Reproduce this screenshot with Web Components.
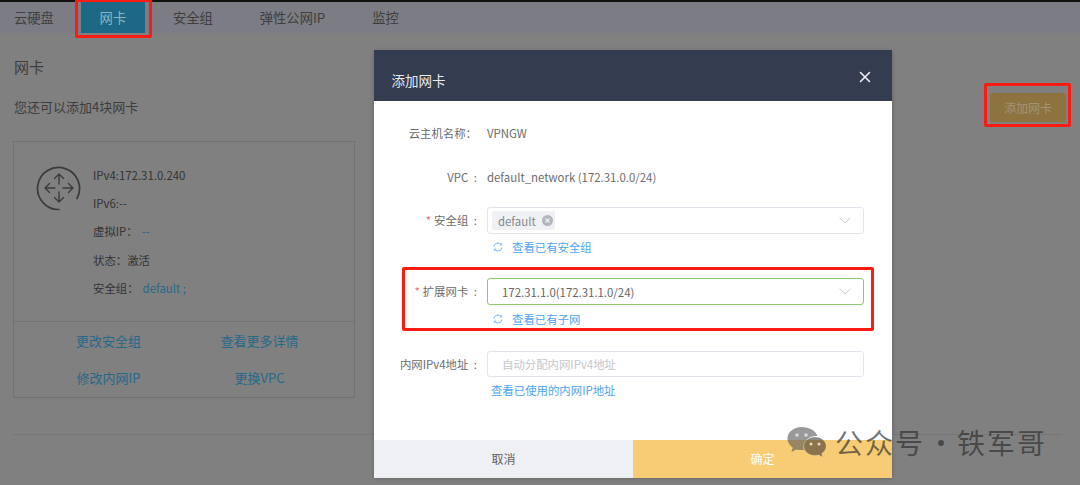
<!DOCTYPE html>
<html lang="zh">
<head>
<meta charset="utf-8">
<title>添加网卡</title>
<style>
  html, body { margin: 0; height: 485px; overflow: hidden; }
  body {
    position: relative;
    background: #808080;
    font-family: "Noto Sans CJK SC", "Liberation Sans", sans-serif;
    font-size: 12px;
    color: #3d3d3d;
  }
</style>
</head>
<body>
  <tab-bar>
    <tab-item>云硬盘</tab-item>
    <tab-item active>网卡</tab-item>
    <tab-item>安全组</tab-item>
    <tab-item>弹性公网IP</tab-item>
    <tab-item>监控</tab-item>
  </tab-bar>

  <nic-page>
    <nic-card>
      <card-link slot="actions">更改安全组</card-link>
      <card-link slot="actions">查看更多详情</card-link>
      <card-link slot="actions">修改内网IP</card-link>
      <card-link slot="actions">更换VPC</card-link>
    </nic-card>
  </nic-page>

  <nic-dialog heading="添加网卡">
    <form-row label="云主机名称：" style="--top:19px">VPNGW</form-row>
    <form-row label="VPC :" style="--top:18px">default_network (172.31.0.0/24)</form-row>
    <form-row label="安全组 :" required style="--top:17px">
      <select-box><tag-chip>default</tag-chip></select-box>
      <hint-link slot="hint" refresh>查看已有安全组</hint-link>
    </form-row>
    <form-row label="扩展网卡 :" required style="--top:20px">
      <select-box ok>172.31.1.0(172.31.1.0/24)</select-box>
      <hint-link slot="hint" refresh style="margin-top:4px;margin-bottom:0">查看已有子网</hint-link>
    </form-row>
    <form-row label="内网IPv4地址 :" style="--top:22px">
      <select-box plain placeholder style="height:26px">自动分配内网IPv4地址</select-box>
      <hint-link slot="hint">查看已使用的内网IP地址</hint-link>
    </form-row>
  </nic-dialog>

  <red-mark style="left:75px;top:-1px;width:77px;height:39px"></red-mark>
  <red-mark style="left:984px;top:83px;width:87px;height:44px"></red-mark>
  <red-mark style="left:402px;top:267px;width:472px;height:64px"></red-mark>
  <wechat-mark></wechat-mark>

<script>
// each component: small template + shadow root
function define(name, html, extra) {
  const tpl = document.createElement('template');
  tpl.innerHTML = html;
  class El extends HTMLElement {
    constructor() {
      super();
      this.attachShadow({ mode: 'open' });
      this.shadowRoot.appendChild(tpl.content.cloneNode(true));
    }
    connectedCallback() { if (extra) extra(this, this.shadowRoot); }
  }
  customElements.define(name, El);
}

define('tab-bar', `
  <style>
    :host {
      display: flex;
      height: 31px;
      background: #7b7c84;
      border-top: 2px solid #111;
      padding-left: 14px;
      font-size: 13.3px;
      color: #3f3f3f;
    }
  </style>
  <slot></slot>
`);

define('tab-item', `
  <style>
    :host {
      display: flex;
      align-items: center;
      justify-content: center;
      margin-right: 47px;
    }
    :host([active]) {
      width: 64px;
      margin: 0 28px 0 -20px;
      background: #1d6884;
      color: #8fb3c1;
    }
  </style>
  <slot></slot>
`);

define('nic-page', `
  <style>
    :host { display: block; padding: 0 13px; }
    .head { display: flex; flex-direction: column; }
    h2 { margin: 23px 0 0 1px; font-size: 15px; line-height: 22px; font-weight: 400; color: #3d3d3d; }
    .row { display: flex; justify-content: space-between; align-items: center; margin-top: 15px; height: 29px; }
    p { margin: -2px 0 0 1px; font-size: 13px; color: #3d3d3d; }
    button {
      width: 76px; height: 29px; margin-right: 1px;
      border: 0; border-radius: 3px;
      background: #8c7340; color: #a39374;
      font: inherit; font-size: 12px;
    }
    .rule { height: 1px; background: #767676; margin: 36px 5px 0 0; }
  </style>
  <div class="head">
    <h2>网卡</h2>
    <div class="row"><p>您还可以添加4块网卡</p><button>添加网卡</button></div>
  </div>
  <slot></slot>
  <div class="rule"></div>
`);

define('nic-card', `
  <style>
    :host {
      display: block;
      box-sizing: border-box;
      width: 342px;
      height: 257px;
      margin-top: 19px;
      border: 1px solid #727272;
      font-size: 11.4px;
      color: #333;
    }
    .top {
      display: flex;
      height: 180px;
      box-sizing: border-box;
      border-bottom: 1px solid #727272;
      padding: 19px 0 0 22px;
    }
    svg { width: 46px; height: 46px; margin-top: 4px; flex: none; }
    ul { list-style: none; margin: 0 0 0 11px; padding: 0; }
    li { height: 28.2px; line-height: 28px; white-space: nowrap; }
    b { font-weight: 400; color: #24698a; margin-left: 4px; }
    .actions {
      display: grid;
      grid-template-columns: 151px 151px;
      grid-auto-rows: 37px;
      padding: 0 0 0 19px;
    }
  </style>
  <div class="top">
    <svg viewBox="0 0 46 46" fill="none" stroke="#3b3b3b" stroke-linecap="round" stroke-linejoin="round">
      <path stroke-width="1.700" d="M23 44.500A21 21 0 1 1 41 33.500"/>
      <path stroke-width="1.400" d="M23 9v10M18.500 13.500l4.500-4.500 4.500 4.500M23 27v10M18.500 32.500l4.500 4.500 4.500-4.500M9 23h10M13.500 18.500l-4.500 4.500 4.500 4.500M27 23h10M32.500 18.500l4.500 4.500-4.500 4.500"/>
    </svg>
    <ul>
      <li>IPv4:172.31.0.240</li>
      <li>IPv6:--</li>
      <li>虚拟IP：<b>--</b></li>
      <li>状态：激活</li>
      <li>安全组：<b>default ;</b></li>
    </ul>
  </div>
  <div class="actions"><slot name="actions"></slot></div>
`);

define('card-link', `
  <style>
    :host {
      display: flex;
      align-items: center;
      justify-content: center;
      font-size: 13px;
      color: #26698a;
    }
  </style>
  <slot></slot>
`);

define('nic-dialog', `
  <style>
    :host {
      position: absolute;
      left: 374px;
      top: 50px;
      width: 518px;
      height: 427px;
      display: flex;
      flex-direction: column;
      background: #fff;
      box-shadow: 0 1px 4px rgba(0,0,0,.25);
      color: #666;
    }
    header {
      flex: none;
      height: 51px;
      box-sizing: border-box;
      display: flex;
      justify-content: space-between;
      padding: 19px 21px 0 17.5px;
      background: #343c50;
      color: #e8e9ec;
      font-size: 13.5px;
      line-height: 22px;
    }
    svg { width: 12px; height: 12px; margin-top: 2px; }
    main { flex: 1; display: flex; flex-direction: column; }
    footer { flex: none; height: 37px; display: grid; grid-template-columns: 259px 259px; line-height: 38px; text-align: center; font-size: 12px; }
    .cancel { background: #eff0f4; color: #5f5f5f; }
    .ok { background: #f8cc74; color: #fff; }
  </style>
  <header>
    <span id="title"></span>
    <svg viewBox="0 0 12 12" stroke="#eef0f3" stroke-width="1.600" stroke-linecap="round"><path d="M1.500 1.500l9 9M10.500 1.500l-9 9"/></svg>
  </header>
  <main><slot></slot></main>
  <footer><div class="cancel">取消</div><div class="ok">确定</div></footer>
`, (el, root) => { root.getElementById('title').textContent = el.getAttribute('heading'); });

define('form-row', `
  <style>
    :host {
      display: grid;
      grid-template-columns: 107px 377px;
      column-gap: 6px;
      margin-top: var(--top, 0);
      font-size: 11.4px;
      color: #6c6c6c;
    }
    label { height: 26px; line-height: 26px; padding-right: 4px; text-align: right; white-space: nowrap; word-spacing: 3px; }
    i { font-style: normal; color: #ef6f6f; margin-right: 3px; }
    .control { line-height: 26px; white-space: nowrap; }
    .hint { grid-column: 2; }
  </style>
  <label id="label"></label>
  <div class="control"><slot></slot></div>
  <div class="hint"><slot name="hint"></slot></div>
`, (el, root) => {
  const label = root.getElementById('label');
  if (el.hasAttribute('required')) {
    const star = document.createElement('i');
    star.textContent = '*';
    label.appendChild(star);
  }
  label.appendChild(document.createTextNode(el.getAttribute('label')));
});

define('select-box', `
  <style>
    :host {
      display: flex;
      align-items: center;
      justify-content: space-between;
      box-sizing: border-box;
      height: 27px;
      padding: 0 12px 0 4px;
      border: 1px solid #e3e5ec;
      border-radius: 3px;
      background: #fff;
      color: #666;
    }
    :host([ok]) { border-color: #8ec96f; padding-left: 14px; }
    :host([placeholder]) { padding-left: 14px; color: #c4c6cc; }
    :host([plain]) svg { display: none; }
    svg { width: 12px; height: 7px; flex: none; }
  </style>
  <span><slot></slot></span>
  <svg viewBox="0 0 12 7" fill="none" stroke="#c9ccd3" stroke-width="1"><path d="M.5.8L6 6l5.500-5.200"/></svg>
`);

define('tag-chip', `
  <style>
    :host {
      display: inline-flex;
      align-items: center;
      height: 19px;
      padding: 0 2px 0 6px;
      gap: 6px;
      border-radius: 2px;
      background: #f0f1f4;
      color: #85878d;
    }
    svg { width: 11px; height: 11px; }
  </style>
  <slot></slot>
  <svg viewBox="0 0 11 11"><circle cx="5.500" cy="5.500" r="5.500" fill="#b4b6bd"/><path d="M3.500 3.500l4 4M7.500 3.500l-4 4" stroke="#f0f1f4" stroke-width="1.200"/></svg>
`);

define('hint-link', `
  <style>
    :host {
      display: flex;
      align-items: center;
      height: 20px;
      margin-top: 3px;
      margin-bottom: 1px;
      padding-left: 4px;
      color: #4ba4f2;
      font-size: 11.4px;
    }
    :host([refresh]) { padding-left: 6px; }
    svg { display: none; width: 10px; height: 10px; margin-right: 9px; }
    :host([refresh]) svg { display: block; }
  </style>
  <svg viewBox="0 0 10 10" fill="none" stroke="#6fb5f2" stroke-width="1">
    <path d="M1 4.400A4 4 0 0 1 8 2.400M9 5.600A4 4 0 0 1 2 7.600"/>
    <path d="M8.600 1v1.900H6.900M1.400 9V7.100h1.700" stroke-width=".9"/>
  </svg>
  <slot></slot>
`);

define('red-mark', `
  <style>
    :host {
      position: absolute;
      box-sizing: border-box;
      border: 3px solid #fb1b12;
      border-radius: 2px;
      pointer-events: none;
    }
  </style>
`);

define('wechat-mark', `
  <style>
    :host {
      position: absolute;
      left: 787px;
      top: 424px;
      display: flex;
      align-items: center;
      height: 38px;
      font-size: 28px;
      letter-spacing: 2px;
      color: rgba(45,45,45,.66);
      white-space: nowrap;
    }
    svg { width: 40px; height: 34px; flex: none; margin-right: 8px; }
    span { margin-top: -3px; }
    .dot { width: 32px; text-align: center; letter-spacing: 0; }
  </style>
  <svg viewBox="0 0 40 34">
    <path d="M14.500 1C6.700 1 .5 6.200.5 12.600c0 3.700 2 6.900 5.200 9L4.400 26l5-2.600c1.600.5 3.300.7 5.100.7 1 0 1.800-.1 2.600-.2-.4-1-.6-2.100-.6-3.200 0-6 5.800-10.800 12.800-10.800h1.100C28.700 4.800 22.200 1 14.500 1z" fill="rgba(90,90,90,.62)"/>
    <circle cx="10" cy="9" r="1.800" fill="#d8d8d8"/><circle cx="19" cy="9" r="1.800" fill="#d8d8d8"/>
    <path d="M28 11c-6.200 0-11.200 4.100-11.200 9.200 0 5.100 5 9.200 11.200 9.200 1.300 0 2.600-.2 3.800-.5l3.900 2.100-1-3.500c2.700-1.700 4.400-4.300 4.400-7.300C39.100 15.100 34.200 11 28 11z" fill="rgba(70,62,50,.62)" stroke="rgba(255,255,255,.25)" stroke-width=".8"/>
    <circle cx="24" cy="18" r="1.500" fill="#e8dcc0"/><circle cx="32" cy="18" r="1.500" fill="#e8dcc0"/>
  </svg>
  <span>公众号</span><span class="dot">·</span><span>铁军哥</span>
`);
</script>
</body>
</html>
